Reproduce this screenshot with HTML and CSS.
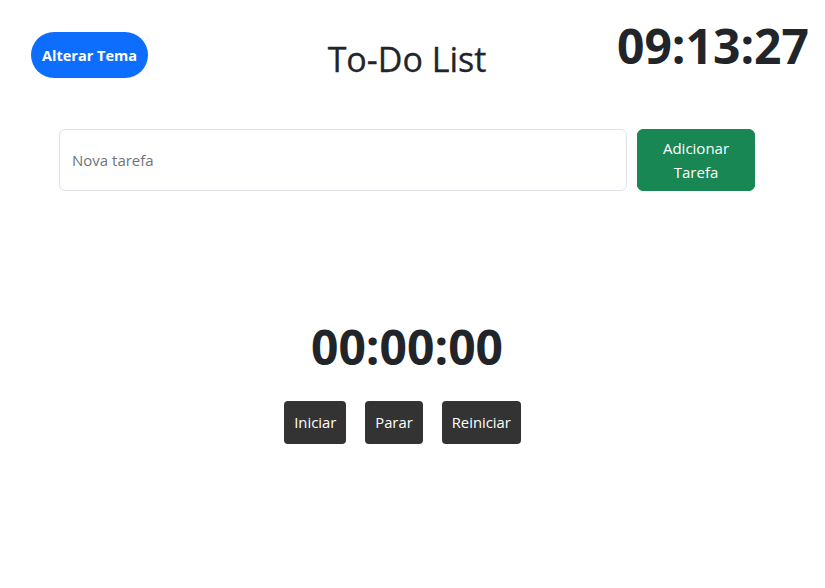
FILE: index.html
```html
<!DOCTYPE html>
<html lang="pt">
<head>
<meta charset="utf-8">
<title>To-Do List</title>
<link rel="stylesheet" href="styles.css">
</head>
<body>
<div class="page">
  <header class="top">
    <button class="theme-btn">Alterar Tema</button>
    <h1 class="title">To-Do List</h1>
    <div class="clock">09:13:27</div>
  </header>
  <section class="add-row">
    <input class="task-input" type="text" placeholder="Nova tarefa">
    <button class="add-btn">Adicionar Tarefa</button>
  </section>
  <ul class="task-list"></ul>
  <section class="stopwatch">
    <div class="sw-time">00:00:00</div>
    <div class="sw-controls">
      <button class="sw-btn">Iniciar</button>
      <button class="sw-btn">Parar</button>
      <button class="sw-btn">Reiniciar</button>
    </div>
  </section>
</div>
</body>
</html>
```
FILE: styles.css
```css
* { box-sizing: border-box; }
html, body { margin: 0; padding: 0; background: #fff; }
body {
  font-family: "Open Sans", "Noto Sans", sans-serif;
  color: #212529;
  font-size: 16px;
  line-height: 1.5;
}
.page {
  width: 814px;
}
.top {
  display: grid;
  grid-template-columns: 1fr auto 1fr;
  align-items: start;
  height: 129px;
}
.theme-btn {
  justify-self: start;
  margin: 32px 0 0 31px;
  width: 117px;
  height: 46px;
  border: none;
  border-radius: 23px;
  background: #0d6efd;
  color: #fff;
  font-family: inherit;
  font-weight: 700;
  font-size: 14.5px;
  padding: 0;
}
.title {
  margin: 39px 0 0;
  font-size: 34px;
  font-weight: 500;
  line-height: 1.2;
  -webkit-text-stroke: 0.3px #212529;
}
.clock {
  justify-self: end;
  margin-top: 17px;
  font-size: 48px;
  font-weight: 700;
  line-height: 1.2;
  margin-right: 5px;
}
.add-row {
  display: flex;
  gap: 10px;
  width: 696px;
  margin-left: 59px;
}
.task-input {
  flex: 1;
  height: 62px;
  border: 1px solid #dee2e6;
  border-radius: 6px;
  padding: 6px 12px;
  font-family: inherit;
  font-size: 15px;
  color: #212529;
}
.task-input::placeholder { color: #6c757d; }
.add-btn {
  width: 118px;
  height: 62px;
  border: 1px solid #198754;
  border-radius: 6px;
  background: #198754;
  color: #fff;
  font-family: inherit;
  font-size: 15px;
  line-height: 24px;
  padding: 6px 12px;
}
.task-list {
  list-style: none;
  margin: 0;
  padding: 0;
  height: 127px;
}
.stopwatch {
  display: flex;
  flex-direction: column;
  align-items: center;
}
.sw-time {
  font-size: 48px;
  font-weight: 700;
  line-height: 1.2;
}
.sw-controls {
  display: flex;
  gap: 19px;
  margin-top: 25px;
  padding-right: 9px;
}
.sw-btn {
  height: 43px;
  padding: 0 10px;
  border: none;
  border-radius: 4px;
  background: #333;
  color: #fff;
  font-family: inherit;
  font-size: 14.8px;
}
```
